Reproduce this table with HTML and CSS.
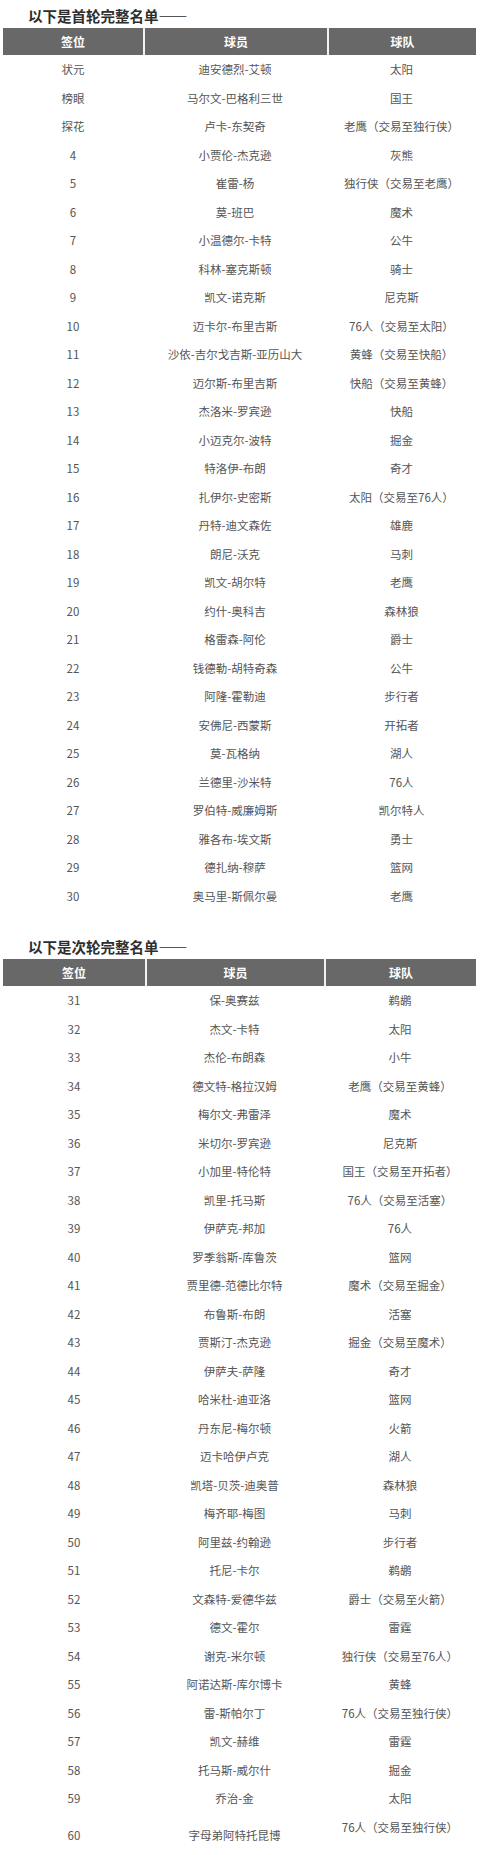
FILE: index.html
```html
<!DOCTYPE html>
<html lang="zh">
<head>
<meta charset="utf-8">
<link rel="stylesheet" href="styles.css">
</head>
<body>
<div class="page">
  <h2 class="title">以下是首轮完整名单——</h2>
  <div class="table t1">
    <div class="row head"><div>签位</div><div>球员</div><div>球队</div></div>
    <div class="row"><div>状元</div><div>迪安德烈-艾顿</div><div>太阳</div></div>
    <div class="row"><div>榜眼</div><div>马尔文-巴格利三世</div><div>国王</div></div>
    <div class="row"><div>探花</div><div>卢卡-东契奇</div><div>老鹰（交易至独行侠）</div></div>
    <div class="row"><div>4</div><div>小贾伦-杰克逊</div><div>灰熊</div></div>
    <div class="row"><div>5</div><div>崔雷-杨</div><div>独行侠（交易至老鹰）</div></div>
    <div class="row"><div>6</div><div>莫-班巴</div><div>魔术</div></div>
    <div class="row"><div>7</div><div>小温德尔-卡特</div><div>公牛</div></div>
    <div class="row"><div>8</div><div>科林-塞克斯顿</div><div>骑士</div></div>
    <div class="row"><div>9</div><div>凯文-诺克斯</div><div>尼克斯</div></div>
    <div class="row"><div>10</div><div>迈卡尔-布里吉斯</div><div>76人（交易至太阳）</div></div>
    <div class="row"><div>11</div><div>沙依-吉尔戈吉斯-亚历山大</div><div>黄蜂（交易至快船）</div></div>
    <div class="row"><div>12</div><div>迈尔斯-布里吉斯</div><div>快船（交易至黄蜂）</div></div>
    <div class="row"><div>13</div><div>杰洛米-罗宾逊</div><div>快船</div></div>
    <div class="row"><div>14</div><div>小迈克尔-波特</div><div>掘金</div></div>
    <div class="row"><div>15</div><div>特洛伊-布朗</div><div>奇才</div></div>
    <div class="row"><div>16</div><div>扎伊尔-史密斯</div><div>太阳（交易至76人）</div></div>
    <div class="row"><div>17</div><div>丹特-迪文森佐</div><div>雄鹿</div></div>
    <div class="row"><div>18</div><div>朗尼-沃克</div><div>马刺</div></div>
    <div class="row"><div>19</div><div>凯文-胡尔特</div><div>老鹰</div></div>
    <div class="row"><div>20</div><div>约什-奥科吉</div><div>森林狼</div></div>
    <div class="row"><div>21</div><div>格雷森-阿伦</div><div>爵士</div></div>
    <div class="row"><div>22</div><div>钱德勒-胡特奇森</div><div>公牛</div></div>
    <div class="row"><div>23</div><div>阿隆-霍勒迪</div><div>步行者</div></div>
    <div class="row"><div>24</div><div>安佛尼-西蒙斯</div><div>开拓者</div></div>
    <div class="row"><div>25</div><div>莫-瓦格纳</div><div>湖人</div></div>
    <div class="row"><div>26</div><div>兰德里-沙米特</div><div>76人</div></div>
    <div class="row"><div>27</div><div>罗伯特-威廉姆斯</div><div>凯尔特人</div></div>
    <div class="row"><div>28</div><div>雅各布-埃文斯</div><div>勇士</div></div>
    <div class="row"><div>29</div><div>德扎纳-穆萨</div><div>篮网</div></div>
    <div class="row"><div>30</div><div>奥马里-斯佩尔曼</div><div>老鹰</div></div>
  </div>

  <h2 class="title second">以下是次轮完整名单——</h2>
  <div class="table t2">
    <div class="row head"><div>签位</div><div>球员</div><div>球队</div></div>
    <div class="row"><div>31</div><div>保-奥赛兹</div><div>鹈鹕</div></div>
    <div class="row"><div>32</div><div>杰文-卡特</div><div>太阳</div></div>
    <div class="row"><div>33</div><div>杰伦-布朗森</div><div>小牛</div></div>
    <div class="row"><div>34</div><div>德文特-格拉汉姆</div><div>老鹰（交易至黄蜂）</div></div>
    <div class="row"><div>35</div><div>梅尔文-弗雷泽</div><div>魔术</div></div>
    <div class="row"><div>36</div><div>米切尔-罗宾逊</div><div>尼克斯</div></div>
    <div class="row"><div>37</div><div>小加里-特伦特</div><div>国王（交易至开拓者）</div></div>
    <div class="row"><div>38</div><div>凯里-托马斯</div><div>76人（交易至活塞）</div></div>
    <div class="row"><div>39</div><div>伊萨克-邦加</div><div>76人</div></div>
    <div class="row"><div>40</div><div>罗季翁斯-库鲁茨</div><div>篮网</div></div>
    <div class="row"><div>41</div><div>贾里德-范德比尔特</div><div>魔术（交易至掘金）</div></div>
    <div class="row"><div>42</div><div>布鲁斯-布朗</div><div>活塞</div></div>
    <div class="row"><div>43</div><div>贾斯汀-杰克逊</div><div>掘金（交易至魔术）</div></div>
    <div class="row"><div>44</div><div>伊萨夫-萨隆</div><div>奇才</div></div>
    <div class="row"><div>45</div><div>哈米杜-迪亚洛</div><div>篮网</div></div>
    <div class="row"><div>46</div><div>丹东尼-梅尔顿</div><div>火箭</div></div>
    <div class="row"><div>47</div><div>迈卡哈伊卢克</div><div>湖人</div></div>
    <div class="row"><div>48</div><div>凯塔-贝茨-迪奥普</div><div>森林狼</div></div>
    <div class="row"><div>49</div><div>梅齐耶-梅图</div><div>马刺</div></div>
    <div class="row"><div>50</div><div>阿里兹-约翰逊</div><div>步行者</div></div>
    <div class="row"><div>51</div><div>托尼-卡尔</div><div>鹈鹕</div></div>
    <div class="row"><div>52</div><div>文森特-爱德华兹</div><div>爵士（交易至火箭）</div></div>
    <div class="row"><div>53</div><div>德文-霍尔</div><div>雷霆</div></div>
    <div class="row"><div>54</div><div>谢克-米尔顿</div><div>独行侠（交易至76人）</div></div>
    <div class="row"><div>55</div><div>阿诺达斯-库尔博卡</div><div>黄蜂</div></div>
    <div class="row"><div>56</div><div>雷-斯帕尔丁</div><div>76人（交易至独行侠）</div></div>
    <div class="row"><div>57</div><div>凯文-赫维</div><div>雷霆</div></div>
    <div class="row"><div>58</div><div>托马斯-威尔什</div><div>掘金</div></div>
    <div class="row"><div>59</div><div>乔治-金</div><div>太阳</div></div>
    <div class="row tall"><div>60</div><div>字母弟阿特托昆博</div><div class="top">76人（交易至独行侠）<br>&nbsp;</div></div>
  </div>
</div>
</body>
</html>
```

FILE: styles.css
```css
html, body {
  margin: 0;
  padding: 0;
  background: #ffffff;
}

body {
  font-family: "Noto Sans CJK SC", "Noto Sans", sans-serif;
  color: #555555;
}

.page {
  width: 480px;
  padding: 6px 4px 0 3px;
  box-sizing: border-box;
}

.title {
  margin: 0 0 2px 25px;
  font-size: 14.5px;
  line-height: 20px;
  font-weight: 700;
  color: #2e2e2e;
}

.title.second {
  margin-top: 27px;
}

.table {
  display: flex;
  flex-direction: column;
}

.row {
  display: grid;
  align-items: center;
  font-size: 11.5px;
  line-height: 16px;
  text-align: center;
}

.t1 .row {
  grid-template-columns: 140px 184px 149px;
}

.t2 .row {
  grid-template-columns: 142px 179px 152px;
}

.row > div {
  padding: 6.25px 0;
  white-space: nowrap;
}

.row.head {
  background: #686868;
  color: #ffffff;
  font-weight: 700;
  font-size: 12px;
}

.row.head > div {
  padding: 5.5px 0;
}

.row.head > div + div {
  border-left: 2px solid #f2f2f2;
}

.row .top {
  align-self: start;
}
```
